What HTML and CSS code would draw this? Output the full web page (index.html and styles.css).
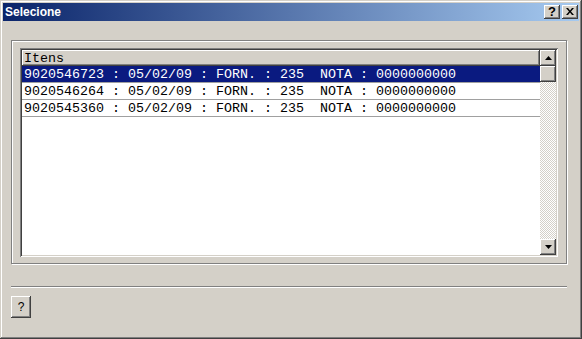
FILE: index.html
```html
<!DOCTYPE html>
<html lang="pt">
<head>
    <meta charset="UTF-8">
    <title>Selecione</title>
    <link rel="stylesheet" href="styles.css">
</head>
<body>
    <div class="window">
        <div class="titlebar">
            <span class="title">Selecione</span>
            <div class="title-buttons">
                <div class="tbtn help">?</div>
                <div class="tbtn">
                    <svg width="8" height="7" viewBox="0 0 8 7"><path d="M0 0h2l2 2.5L6 0h2L5 3.5 8 7H6L4 4.5 2 7H0l3-3.5z" fill="#000"/></svg>
                </div>
            </div>
        </div>

        <div class="content">
            <div class="groupbox">
                <div class="listbox">
                    <div class="list">
                        <div class="header">Itens</div>
                        <div class="row selected">9020546723 : 05/02/09 : FORN. : 235  NOTA : 0000000000</div>
                        <div class="row">9020546264 : 05/02/09 : FORN. : 235  NOTA : 0000000000</div>
                        <div class="row">9020545360 : 05/02/09 : FORN. : 235  NOTA : 0000000000</div>
                    </div>
                    <div class="scrollbar">
                        <div class="sbtn">
                            <svg width="7" height="4" viewBox="0 0 7 4"><path d="M3.5 0L7 4H0z" fill="#000"/></svg>
                        </div>
                        <div class="thumb"></div>
                        <div class="track"></div>
                        <div class="sbtn">
                            <svg width="7" height="4" viewBox="0 0 7 4"><path d="M0 0h7L3.5 4z" fill="#000"/></svg>
                        </div>
                    </div>
                </div>
            </div>

            <div class="separator"></div>

            <button class="help-button">?</button>
        </div>
    </div>
</body>
</html>
```

FILE: styles.css
```css
body {
    margin: 0;
    background: #d4d0c8;
    font-family: "Liberation Sans", Arial, sans-serif;
}

.window {
    width: 582px;
    height: 339px;
    box-sizing: border-box;
    padding: 3px;
    background: #d4d0c8;
    box-shadow: inset -1px -1px #404040, inset 1px 1px #d4d0c8,
                inset -2px -2px #808080, inset 2px 2px #fff;
}

.titlebar {
    height: 18px;
    display: flex;
    align-items: center;
    justify-content: space-between;
    padding: 0 1px 0 2px;
    background: linear-gradient(to right, #0a246a, #a6caf0);
}

.title {
    color: #fff;
    font-weight: bold;
    font-size: 12px;
}

.title-buttons {
    display: flex;
    gap: 2px;
}

.tbtn, .sbtn, .thumb, .header, .help-button {
    background: #d4d0c8;
    box-shadow: inset -1px -1px #404040, inset 1px 1px #fff,
                inset -2px -2px #808080, inset 2px 2px #d4d0c8;
}

.tbtn {
    width: 16px;
    height: 14px;
    display: flex;
    align-items: center;
    justify-content: center;
}

.tbtn svg {
    margin-top: -1px;
}

.help {
    font-weight: bold;
    font-size: 13px;
    line-height: 14px;
}

.content {
    padding: 19px 0 0 8px;
}

.groupbox {
    width: 556px;
    height: 224px;
    box-sizing: border-box;
    padding: 7px 0 0 8px;
    border: 1px solid #808080;
    box-shadow: inset 1px 1px #fff, 1px 1px #fff;
}

.listbox {
    width: 538px;
    height: 209px;
    box-sizing: border-box;
    padding: 2px;
    display: flex;
    background: #fff;
    box-shadow: inset 1px 1px #808080, inset -1px -1px #fff,
                inset 2px 2px #404040, inset -2px -2px #d4d0c8;
}

.list {
    width: 518px;
    font-family: "Liberation Mono", "Courier New", monospace;
    font-size: 13.33px;
}

.header {
    height: 16px;
    line-height: 17px;
    padding-left: 2px;
    box-sizing: border-box;
}

.row {
    height: 17px;
    line-height: 16px;
    padding: 1px 0 0 2px;
    box-sizing: border-box;
    border-bottom: 1px solid #a0a0a0;
    color: #000;
    white-space: pre;
}

.row.selected {
    background: #0a1a80;
    color: #fff;
}

.scrollbar {
    width: 16px;
    display: flex;
    flex-direction: column;
}

.sbtn {
    height: 16px;
    display: flex;
    align-items: center;
    justify-content: center;
}

.thumb {
    height: 16px;
}

.track {
    flex: 1;
    background: repeating-conic-gradient(#fff 0 25%, #d4d0c8 0 50%) 0 0 / 2px 2px;
}

.separator {
    width: 556px;
    margin-top: 22px;
    border-top: 1px solid #808080;
    border-bottom: 1px solid #fff;
}

.help-button {
    display: block;
    margin-top: 8px;
    width: 20px;
    height: 22px;
    border: none;
    padding: 0;
    font-family: "Liberation Sans", Arial, sans-serif;
    font-size: 12px;
    color: #000;
}
```
